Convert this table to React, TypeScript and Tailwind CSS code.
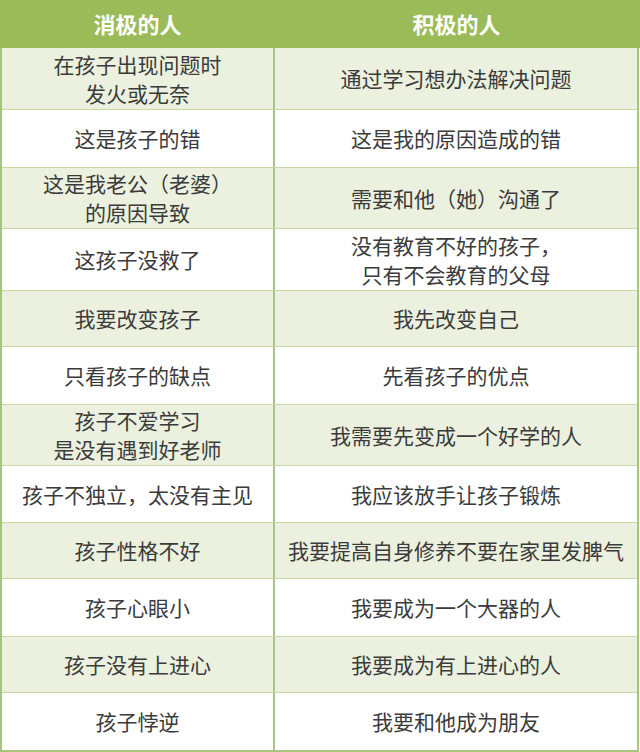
import React from 'react';

const rows: { neg: string[]; pos: string[]; h: string }[] = [
  { neg: ['在孩子出现问题时', '发火或无奈'], pos: ['通过学习想办法解决问题'], h: 'h-[62px]' },
  { neg: ['这是孩子的错'], pos: ['这是我的原因造成的错'], h: 'h-[58px]' },
  { neg: ['这是我老公（老婆）', '的原因导致'], pos: ['需要和他（她）沟通了'], h: 'h-[61px]' },
  { neg: ['这孩子没救了'], pos: ['没有教育不好的孩子，', '只有不会教育的父母'], h: 'h-[62px]' },
  { neg: ['我要改变孩子'], pos: ['我先改变自己'], h: 'h-[56px]' },
  { neg: ['只看孩子的缺点'], pos: ['先看孩子的优点'], h: 'h-[58px]' },
  { neg: ['孩子不爱学习', '是没有遇到好老师'], pos: ['我需要先变成一个好学的人'], h: 'h-[61px]' },
  { neg: ['孩子不独立，太没有主见'], pos: ['我应该放手让孩子锻炼'], h: 'h-[57px]' },
  { neg: ['孩子性格不好'], pos: ['我要提高自身修养不要在家里发脾气'], h: 'h-[56px]' },
  { neg: ['孩子心眼小'], pos: ['我要成为一个大器的人'], h: 'h-[58px]' },
  { neg: ['孩子没有上进心'], pos: ['我要成为有上进心的人'], h: 'h-[56px]' },
  { neg: ['孩子悖逆'], pos: ['我要和他成为朋友'], h: 'h-[57px]' },
];

const Cell = ({ lines, className = '' }: { lines: string[]; className?: string }) => (
  <div className={`flex flex-col items-center justify-center text-center leading-[29px] ${className}`}>
    {lines.map((l, i) => (
      <span key={i}>{l}</span>
    ))}
  </div>
);

export default function App() {
  return (
    <div
      className="w-[640px] h-[752px] bg-white overflow-hidden text-[21px] text-[#3b3b3b]"
      style={{ fontFamily: '"Microsoft YaHei", "Noto Sans CJK SC", "Noto Sans", sans-serif' }}
    >
      <div className="grid grid-cols-[275px_363px] h-[48px] bg-[#9bbb59] text-white font-bold text-[22px]">
        <div className="flex items-center justify-center pb-[2px]">消极的人</div>
        <div className="flex items-center justify-center pb-[2px]">积极的人</div>
      </div>
      <div className="w-[639px] border-l-2 border-r-2 border-b-2 border-[#a9c47e]">
        {rows.map((r, i) => (
          <div
            key={i}
            className={`grid grid-cols-[273px_1fr] ${r.h} ${i % 2 === 0 ? 'bg-[#ebf1de]' : 'bg-white'} ${
              i < rows.length - 1 ? 'border-b border-[#c8d8a6]' : ''
            }`}
          >
            <Cell lines={r.neg} className="border-r-2 border-[#a9c47e]" />
            <Cell lines={r.pos} />
          </div>
        ))}
      </div>
    </div>
  );
}
